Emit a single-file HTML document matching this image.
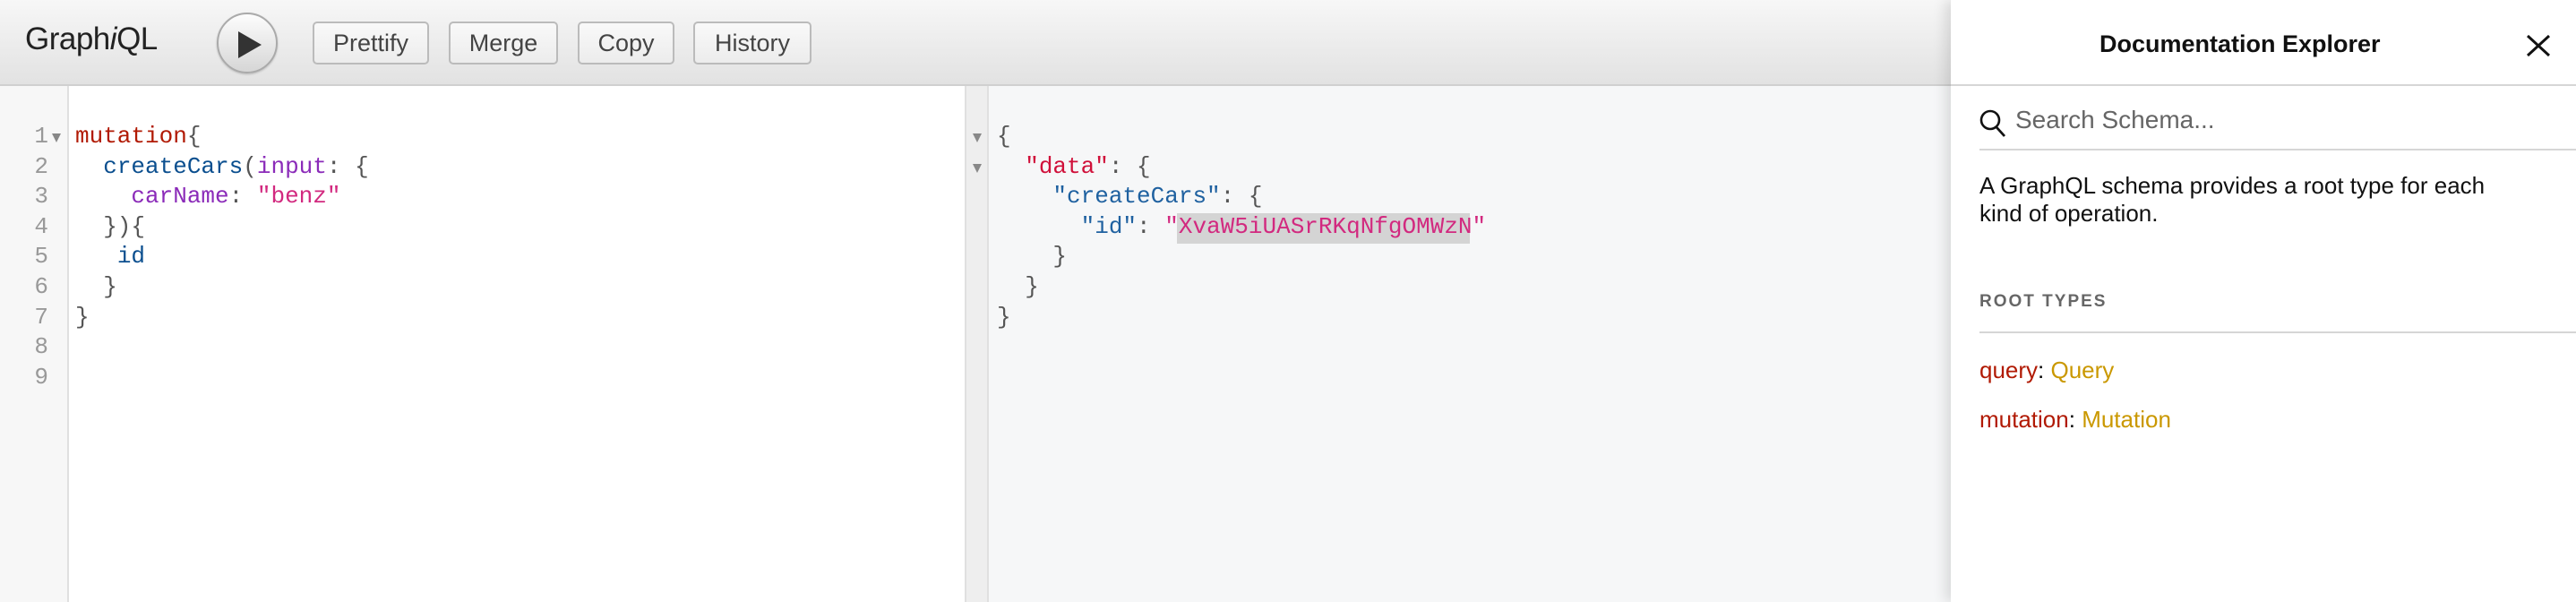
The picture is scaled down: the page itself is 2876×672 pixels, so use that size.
<!DOCTYPE html>
<html><head><meta charset="utf-8"><style>
*{margin:0;padding:0;box-sizing:border-box}
body{width:2876px;height:672px;overflow:hidden;position:relative;background:#fff;font-family:"Liberation Sans",sans-serif}
.tb{position:absolute;left:0;top:0;width:2196px;height:96px;background:linear-gradient(#f7f7f7,#e2e2e2);border-bottom:2px solid #d0d0d0}
.logo{position:absolute;left:28px;top:24px;font-size:35px;color:#222;letter-spacing:-0.5px}
.run{position:absolute;left:242px;top:14px;width:68px;height:68px;border-radius:50%;background:linear-gradient(#fdfdfd,#d6d6d6);border:2px solid #aaa;box-shadow:0 1px 2px rgba(0,0,0,.2)}
.run svg{position:absolute;left:22px;top:19px}
.btn{position:absolute;top:24px;height:48px;border:2px solid #bbb;border-radius:5px;background:linear-gradient(#f9f9f9,#ececec);font-size:27px;color:#444;text-align:center;line-height:44px}
.ed{position:absolute;left:0;top:96px;width:1077px;height:576px;background:#fff}
.gut{position:absolute;left:0;top:96px;width:77px;height:576px;background:#f7f7f7;border-right:2px solid #e0e0e0}
.code{position:absolute;font-family:"Liberation Mono",monospace;font-size:26px;line-height:33.6px;white-space:pre;color:#555}
.ln{position:absolute;left:30px;top:136px;width:24px;text-align:right;font-family:"Liberation Mono",monospace;font-size:26px;line-height:33.6px;color:#999}
.res{position:absolute;left:1077px;top:96px;width:1119px;height:576px;background:#f6f7f8}
.rgut{position:absolute;left:1077px;top:96px;width:27px;height:576px;background:#eee;border-left:2px solid #e0e0e0;border-right:2px solid #e0e0e0}
.arr{position:absolute;width:0;height:0;border-left:5px solid transparent;border-right:5px solid transparent;border-top:10px solid #888}
.doc{position:absolute;left:2178px;top:0;width:698px;height:672px;background:#fff;box-shadow:-6px 0 14px rgba(0,0,0,.12)}
.kw{color:#b11a04}.def{color:#0b4f8f}.at{color:#8b2bb9}.st{color:#d2297f}.pr{color:#1f61a0}
</style></head><body>
<div class="tb">
<div class="logo">Graph<i>i</i>QL</div>
<div class="run"><svg width="26" height="30" viewBox="0 0 26 30"><path d="M0 0L26 15L0 30Z" fill="#333"/></svg></div>
<div class="btn" style="left:349px;width:130px">Prettify</div>
<div class="btn" style="left:501px;width:122px">Merge</div>
<div class="btn" style="left:645px;width:108px">Copy</div>
<div class="btn" style="left:774px;width:132px">History</div>
</div>
<div class="ed"></div>
<div class="gut"></div>
<div class="ln">1<br>2<br>3<br>4<br>5<br>6<br>7<br>8<br>9</div>
<div class="arr" style="left:58px;top:149px"></div>
<div class="code" style="left:84px;top:136px"><span class="kw">mutation</span>{
  <span class="def">createCars</span>(<span class="at">input</span>: {
    <span class="at">carName</span>: <span class="st">"benz"</span>
  }){
   <span class="def">id</span>
  }
}</div>
<div class="res"></div>
<div class="rgut"></div>
<div class="arr" style="left:1086px;top:149px"></div>
<div class="arr" style="left:1086px;top:183px"></div>
<div style="position:absolute;left:1314px;top:238px;width:327px;height:34px;background:#d4d4d4"></div>
<div class="code" style="left:1113px;top:136px">{
  <span style="color:#d0103a">"data"</span>: {
    <span class="pr">"createCars"</span>: {
      <span class="pr">"id"</span>: <span class="st">"XvaW5iUASrRKqNfgOMWzN"</span>
    }
  }
}</div>
<div class="doc">
<div style="position:absolute;left:0;top:0;width:698px;height:96px;border-bottom:2px solid #d6d6d6"></div>
<div style="position:absolute;left:166px;top:34px;font-size:27px;font-weight:bold;color:#111">Documentation Explorer</div>
<svg style="position:absolute;left:643px;top:39px" width="26" height="24" viewBox="0 0 26 24"><path d="M1 1L25 23M25 1L1 23" stroke="#111" stroke-width="3"/></svg>
<svg style="position:absolute;left:32px;top:122px" width="30" height="32" viewBox="0 0 30 32"><circle cx="12" cy="12" r="10" fill="none" stroke="#111" stroke-width="2.6"/><path d="M19 20L28 30" stroke="#111" stroke-width="2.8"/></svg>
<div style="position:absolute;left:72px;top:118px;font-size:28px;color:#666">Search Schema...</div>
<div style="position:absolute;left:32px;top:166px;width:666px;height:2px;background:#d6d6d6"></div>
<div style="position:absolute;left:32px;top:192px;width:590px;font-size:26px;line-height:31px;color:#111">A GraphQL schema provides a root type for each kind of operation.</div>
<div style="position:absolute;left:32px;top:326px;font-size:19px;font-weight:bold;letter-spacing:2px;color:#666">ROOT TYPES</div>
<div style="position:absolute;left:32px;top:370px;width:666px;height:2px;background:#d6d6d6"></div>
<div style="position:absolute;left:32px;top:398px;font-size:26px"><span style="color:#b11a04">query</span>: <span style="color:#ca9800">Query</span></div>
<div style="position:absolute;left:32px;top:453px;font-size:26px"><span style="color:#b11a04">mutation</span>: <span style="color:#ca9800">Mutation</span></div>
</div>
</body></html>
